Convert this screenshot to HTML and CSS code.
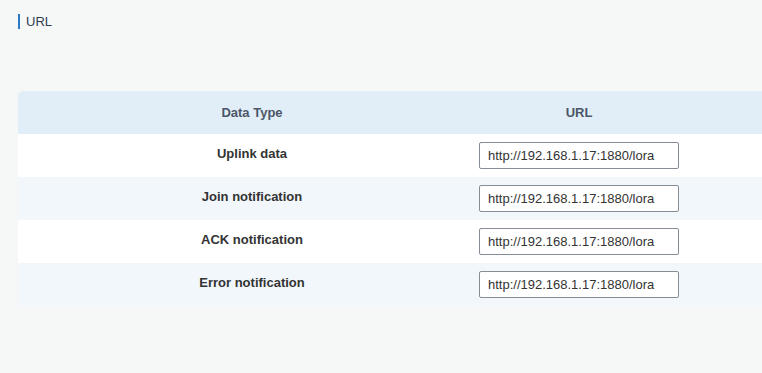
FILE: index.html
```html
<!DOCTYPE html>
<html>
<head>
<meta charset="utf-8">
<link rel="stylesheet" href="styles.css">
</head>
<body>
<div class="page">
  <div class="title">URL</div>
  <div class="table">
    <div class="row head">
      <div class="c1">Data Type</div>
      <div class="c2">URL</div>
    </div>
    <div class="row">
      <div class="c1 label">Uplink data</div>
      <div class="c2"><input class="inp" type="text" value="http://192.168.1.17:1880/lora"></div>
    </div>
    <div class="row alt">
      <div class="c1 label">Join notification</div>
      <div class="c2"><input class="inp" type="text" value="http://192.168.1.17:1880/lora"></div>
    </div>
    <div class="row">
      <div class="c1 label">ACK notification</div>
      <div class="c2"><input class="inp" type="text" value="http://192.168.1.17:1880/lora"></div>
    </div>
    <div class="row alt">
      <div class="c1 label">Error notification</div>
      <div class="c2"><input class="inp" type="text" value="http://192.168.1.17:1880/lora"></div>
    </div>
  </div>
</div>
</body>
</html>
```
FILE: styles.css
```css
html, body {
  margin: 0;
  padding: 0;
  background: #f6f8f8;
  font-family: "Liberation Sans", Arial, sans-serif;
}
.page {
  padding: 14px 0 0 18px;
}
.title {
  border-left: 2px solid #2b7bc4;
  padding-left: 6px;
  font-size: 13px;
  line-height: 15px;
  color: #2f3d50;
  height: 15px;
}
.table {
  margin-top: 62px;
  border-radius: 5px 0 0 0;
  overflow: hidden;
}
.row {
  display: flex;
  height: 43px;
  align-items: center;
  background: #ffffff;
}
.row.alt {
  background: #f2f7fc;
}
.row.head {
  background: #e1eef8;
  color: #4c5667;
  font-weight: bold;
  font-size: 13px;
}
.c1 {
  width: 468px;
  text-align: center;
  flex: none;
}
.c2 {
  width: 186px;
  flex: none;
  display: flex;
  justify-content: center;
}
.label {
  font-size: 13px;
  font-weight: bold;
  color: #333;
  padding-bottom: 5px;
}
.inp {
  box-sizing: border-box;
  width: 200px;
  height: 27px;
  flex: none;
  border: 1px solid #878d96;
  border-radius: 2px;
  padding: 0 8px;
  font-family: "Liberation Sans", Arial, sans-serif;
  font-size: 13px;
  color: #333;
  background: #fff;
  margin: 0;
  outline: none;
}
```
